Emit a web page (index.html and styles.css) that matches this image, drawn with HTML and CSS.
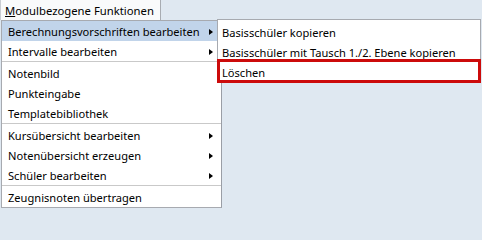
FILE: index.html
```html
<!DOCTYPE html>
<html>
<head>
<meta charset="utf-8">
<link rel="stylesheet" href="styles.css">
</head>
<body>
<div class="bar">
  <div class="tab"><span class="ul">M</span>odulbezogene Funktionen</div>
</div>
<div class="menu">
  <div class="item active"><span>Berechnungsvorschriften bearbeiten</span><i class="arrow"></i></div>
  <div class="item"><span>Intervalle bearbeiten</span><i class="arrow"></i></div>
  <div class="sep"></div>
  <div class="item"><span>Notenbild</span></div>
  <div class="item"><span>Punkteingabe</span></div>
  <div class="item"><span>Templatebibliothek</span></div>
  <div class="sep"></div>
  <div class="item"><span>Kursübersicht bearbeiten</span><i class="arrow"></i></div>
  <div class="item"><span>Notenübersicht erzeugen</span><i class="arrow"></i></div>
  <div class="item"><span>Schüler bearbeiten</span><i class="arrow"></i></div>
  <div class="sep"></div>
  <div class="item"><span>Zeugnisnoten übertragen</span></div>
</div>
<div class="submenu">
  <div class="item"><span>Basisschüler kopieren</span></div>
  <div class="item"><span>Basisschüler mit Tausch 1./2. Ebene kopieren</span></div>
  <div class="item"><span>Löschen</span></div>
  <div class="mark"></div>
</div>
</body>
</html>
```
FILE: styles.css
```css
html, body {
  margin: 0;
  padding: 0;
}
body {
  background: #dfe8f1;
  font-family: "Noto Sans", "Open Sans", sans-serif;
  font-size: 11.1px;
  color: #000;
  width: 482px;
  height: 210px;
  overflow: hidden;
  position: relative;
}
.bar {
  display: flex;
  height: 20px;
}
.tab {
  width: 161px;
  height: 20px;
  box-sizing: border-box;
  padding-left: 4px;
  background: #f9fafb;
  border-right: 1px solid #a8acb2;
  border-left: 1px solid #c8ccd2;
  line-height: 21px;
  white-space: nowrap;
  font-size: 11.3px;
}
.ul {
  text-decoration: underline;
}
.menu {
  margin-left: 1px;
  width: 221px;
  box-sizing: border-box;
  background: #fff;
  border: 1px solid #a7aab0;
  border-right-color: #9a9ea6;
  display: flex;
  flex-direction: column;
}
.item {
  height: 20px;
  display: flex;
  align-items: center;
  justify-content: space-between;
  padding-left: 6px;
  padding-right: 8px;
  padding-top: 1px;
  box-sizing: border-box;
  white-space: nowrap;
}
.item.active {
  background: #c1d4ea;
}
.arrow {
  width: 0;
  height: 0;
  border-top: 3.5px solid transparent;
  border-bottom: 3.5px solid transparent;
  border-left: 4px solid #000;
}
.sep {
  height: 2px;
  box-sizing: border-box;
  border-top: 1px solid #c9c9c9;
}
.submenu {
  position: absolute;
  left: 217px;
  top: 19px;
  width: 264px;
  box-sizing: border-box;
  background: #fff;
  border: 1px solid #a7aab0;
  padding-top: 2px;
  display: flex;
  flex-direction: column;
}
.submenu .item {
  padding-left: 4px;
}
.mark {
  position: absolute;
  left: -1px;
  top: 39px;
  width: 264px;
  height: 24px;
  box-sizing: border-box;
  border: 3px solid #cc0b0b;
}
```
